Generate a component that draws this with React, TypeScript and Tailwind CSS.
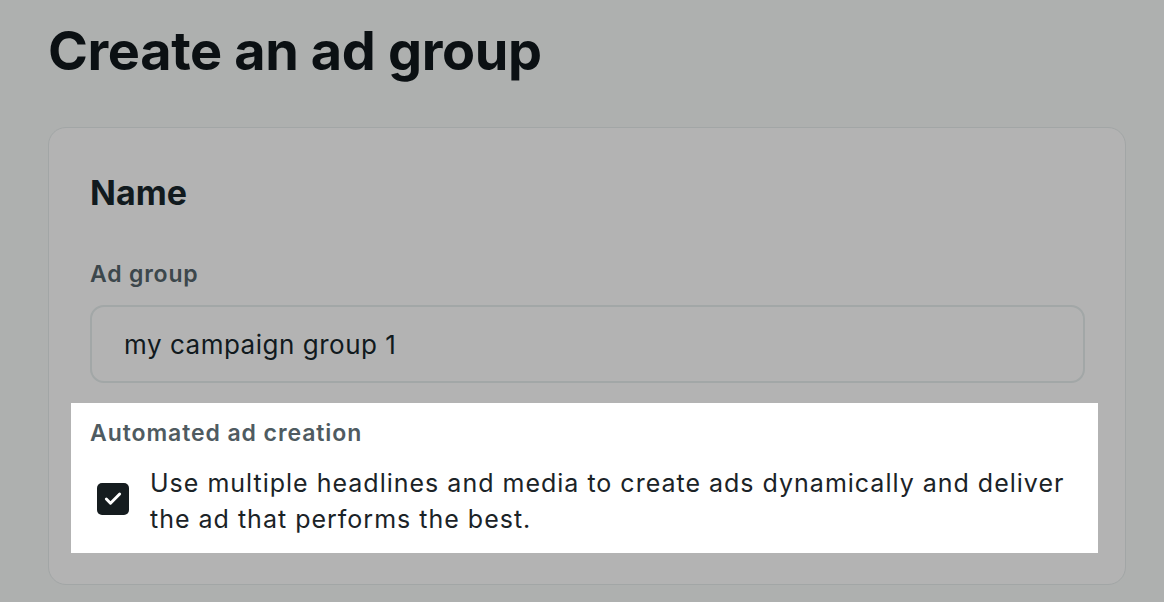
import { Check } from 'lucide-react';

export default function App() {
  return (
    <div
      className="min-h-[602px] w-[1164px] overflow-hidden bg-[#aeb0af] pl-[48px] pt-[24px]"
      style={{ fontFamily: 'Inter, "Noto Sans", sans-serif' }}
    >
      <h1 className="text-[54px] font-bold leading-[54px] tracking-[-0.007em] text-[#0b1013]">
        Create an ad group
      </h1>

      {/* Card */}
      <div className="mt-[49px] w-[1078px] rounded-[18px] border border-[#a2a6a6] bg-[#b3b3b3] pl-[41px] pr-[40px] pt-[45px] pb-[31px]">
        <h2 className="text-[34px] font-bold leading-[40px] text-[#111a1e]">Name</h2>

        <label className="mt-[47px] block text-[23px] font-semibold leading-[28px] tracking-[0.035em] text-[#3c474c]">
          Ad group
        </label>
        <div className="mt-[17px] flex h-[78px] items-center rounded-[14px] border-2 border-[#a2a7a7] px-[32px] text-[26px] tracking-[0.02em] text-[#111a1e]">
          my campaign group 1
        </div>

        {/* Highlighted section */}
        <div className="ml-[-19px] mr-[-13px] mt-[20px] bg-white pb-[16px] pl-[19px] pt-[16px]">
          <div className="text-[23px] font-semibold leading-[28px] tracking-[0.04em] text-[#4f5b61]">
            Automated ad creation
          </div>
          <div className="mt-[18px] flex items-start">
            <div className="ml-[7px] mt-[18px] flex h-[32px] w-[32px] shrink-0 items-center justify-center rounded-[5px] bg-[#151c1f]">
              <Check size={20} strokeWidth={3.5} className="text-white" />
            </div>
            <p className="ml-[21px] pr-[20px] text-[25px] leading-[36px] tracking-[0.04em] text-[#1b2327]">
              Use multiple headlines and media to create ads dynamically and deliver the ad that performs the best.
            </p>
          </div>
        </div>
      </div>
    </div>
  );
}
